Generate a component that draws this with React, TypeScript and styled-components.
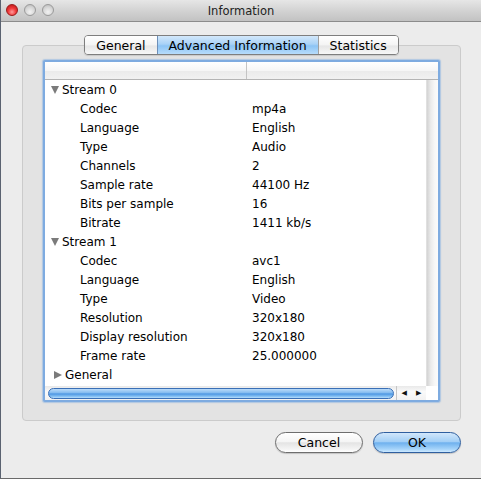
import * as React from 'react';
import styled, { createGlobalStyle } from 'styled-components';

const GlobalStyle = createGlobalStyle`
  html, body {
    margin: 0;
    padding: 0;
    background: #ececec;
  }
  body {
    font-family: "DejaVu Sans", "Liberation Sans", sans-serif;
    color: #000;
  }
`;

const Window = styled.div`
  width: 481px;
  height: 479px;
  box-sizing: border-box;
  display: flex;
  flex-direction: column;
  background: #ececec;
  border-left: 1px solid #5a6270;
  border-bottom: 1px solid #6a6a6a;
  overflow: hidden;
`;

const TitleBar = styled.div`
  position: relative;
  height: 22px;
  min-height: 22px;
  box-sizing: border-box;
  display: flex;
  align-items: center;
  justify-content: center;
  background-image: linear-gradient(180deg, #e6e6e6 0%, #d3d3d3 50%, #c2c2c2 100%);
  border-bottom: 1px solid #8c8c8c;
`;

const Lights = styled.div`
  position: absolute;
  left: 5px;
  top: 4px;
  display: flex;
  gap: 6px;
`;

const Light = styled.div<{ $red?: boolean }>`
  width: 12px;
  height: 12px;
  border-radius: 50%;
  box-sizing: border-box;
  border: 1px solid ${(p) => (p.$red ? '#9a1a1a' : '#9a9a9a')};
  background: ${(p) =>
    p.$red
      ? 'radial-gradient(circle at 50% 70%, #ff9b9b 0%, #f0393a 45%, #b51010 100%)'
      : 'radial-gradient(circle at 50% 70%, #f2f2f2 0%, #d6d6d6 55%, #b4b4b4 100%)'};
`;

const Title = styled.div`
  font-size: 11.5px;
  color: #222;
  margin-top: 1px;
`;

const Body = styled.div`
  flex: 1;
  display: flex;
  flex-direction: column;
  padding: 13px 20px 0 21px;
`;

const Tabs = styled.div`
  align-self: center;
  display: flex;
  margin-bottom: -10px;
  height: 20px;
  box-sizing: border-box;
  border: 1px solid #7e7e7e;
  border-radius: 4px;
  overflow: hidden;
  position: relative;
  z-index: 1;
  box-shadow: 0 1px 1px rgba(0, 0, 0, 0.12);
`;

const Tab = styled.div<{ $active?: boolean }>`
  display: flex;
  align-items: center;
  justify-content: center;
  padding: 0 11px;
  font-size: 12.5px;
  border-left: ${(p) => (p.$active ? '1px solid #6d8fb8' : '1px solid #a0a0a0')};
  background-image: ${(p) =>
    p.$active
      ? 'linear-gradient(180deg, #d3e8fb 0%, #a9d2f7 45%, #8cc4f5 55%, #b7dcfb 100%)'
      : 'linear-gradient(180deg, #ffffff 0%, #f4f4f4 50%, #e6e6e6 55%, #f7f7f7 100%)'};
  &:first-child {
    border-left: none;
  }
`;

const TabBox = styled.div`
  height: 376px;
  box-sizing: border-box;
  background: #e3e3e3;
  border: 1px solid #cbcbcb;
  border-radius: 4px;
  padding: 14px 20px 0 20px;
`;

const Ring = styled.div`
  height: 342px;
  box-sizing: border-box;
  border: 2px solid #7eabe0;
  border-radius: 2px;
  box-shadow: 0 0 1px 1px rgba(126, 171, 224, 0.5);
  background: #fff;
  display: grid;
  grid-template-rows: 18px 1fr 14px;
  overflow: hidden;
`;

const Header = styled.div`
  display: grid;
  grid-template-columns: 202px 1fr;
  box-sizing: border-box;
  border-bottom: 1px solid #b4b4b4;
  background-image: linear-gradient(180deg, #ffffff 0%, #f6f6f6 50%, #ebebeb 55%, #f1f1f1 100%);
`;

const HeaderCell = styled.div`
  border-right: 1px solid #c4c4c4;
`;

const Middle = styled.div`
  display: grid;
  grid-template-columns: 1fr 12px;
  min-height: 0;
`;

const Rows = styled.div`
  display: flex;
  flex-direction: column;
`;

const Row = styled.div`
  display: grid;
  grid-template-columns: 202px 1fr;
  height: 19px;
  align-items: center;
  font-size: 12px;
`;

const Label = styled.div<{ $child?: boolean }>`
  display: flex;
  align-items: center;
  padding-left: ${(p) => (p.$child ? '35px' : '6px')};
  white-space: nowrap;
`;

const Value = styled.div`
  padding-left: 5px;
  white-space: nowrap;
`;

const Disclosure = styled.span<{ $open?: boolean }>`
  display: inline-block;
  width: 0;
  height: 0;
  margin-right: 3px;
  ${(p) =>
    p.$open
      ? `border-left: 4.5px solid transparent;
         border-right: 4.5px solid transparent;
         border-top: 8px solid #7b7b7b;
         margin-left: 0;`
      : `border-top: 4.5px solid transparent;
         border-bottom: 4.5px solid transparent;
         border-left: 8px solid #7b7b7b;
         margin-left: 3px;
         margin-right: 3px;`}
`;

const VTrack = styled.div`
  background-image: linear-gradient(90deg, #d3d3d3 0%, #ebebeb 35%, #f7f7f7 70%, #fbfbfb 100%);
  border-left: 1px solid #e0e0e0;
`;

const HBar = styled.div`
  display: grid;
  grid-template-columns: 1fr 30px 12px;
  align-items: center;
  background-image: linear-gradient(180deg, #e9e9e9 0%, #fafafa 40%, #f2f2f2 100%);
`;

const HTrack = styled.div`
  height: 14px;
  display: flex;
  align-items: center;
  padding: 0 2px 0 3px;
`;

const Thumb = styled.div`
  height: 11px;
  flex: 1;
  border-radius: 6px;
  border: 1px solid #3a6fb6;
  box-sizing: border-box;
  background-image: linear-gradient(
    180deg,
    #bcdcf9 0%,
    #87bdf0 40%,
    #4e97e3 55%,
    #8bc4f5 85%,
    #b9defc 100%
  );
`;

const Arrows = styled.div`
  display: flex;
  align-items: center;
  justify-content: space-around;
  height: 14px;
  border-left: 1px solid #c6c6c6;
  font-size: 7px;
  color: #111;
`;

const Corner = styled.div`
  height: 14px;
  background: #fff;
`;

const Footer = styled.div`
  display: flex;
  justify-content: flex-end;
  gap: 10px;
  padding: 11px 0 0 0;
`;

const Button = styled.div<{ $primary?: boolean }>`
  width: 88px;
  height: 21px;
  box-sizing: border-box;
  border-radius: 11px;
  display: flex;
  align-items: center;
  justify-content: center;
  font-size: 12.5px;
  border: 1px solid ${(p) => (p.$primary ? '#2f5f9f' : '#6e6e6e')};
  box-shadow: 0 1px 1px rgba(0, 0, 0, 0.18);
  background-image: ${(p) =>
    p.$primary
      ? 'linear-gradient(180deg, #d2e7fb 0%, #a3cff6 45%, #6fb1ee 52%, #a6d4fa 85%, #cde9ff 100%)'
      : 'linear-gradient(180deg, #ffffff 0%, #f5f5f5 45%, #e4e4e4 52%, #f4f4f4 85%, #ffffff 100%)'};
`;

type Item = { label: string; value?: string; group?: boolean; open?: boolean };

const items: Item[] = [
  { label: 'Stream 0', group: true, open: true },
  { label: 'Codec', value: 'mp4a' },
  { label: 'Language', value: 'English' },
  { label: 'Type', value: 'Audio' },
  { label: 'Channels', value: '2' },
  { label: 'Sample rate', value: '44100 Hz' },
  { label: 'Bits per sample', value: '16' },
  { label: 'Bitrate', value: '1411 kb/s' },
  { label: 'Stream 1', group: true, open: true },
  { label: 'Codec', value: 'avc1' },
  { label: 'Language', value: 'English' },
  { label: 'Type', value: 'Video' },
  { label: 'Resolution', value: '320x180' },
  { label: 'Display resolution', value: '320x180' },
  { label: 'Frame rate', value: '25.000000' },
  { label: 'General', group: true, open: false },
];

export default function App() {
  return (
    <>
      <GlobalStyle />
      <Window>
        <TitleBar>
          <Lights>
            <Light $red />
            <Light />
            <Light />
          </Lights>
          <Title>Information</Title>
        </TitleBar>
        <Body>
          <Tabs>
            <Tab>General</Tab>
            <Tab $active>Advanced Information</Tab>
            <Tab>Statistics</Tab>
          </Tabs>
          <TabBox>
            <Ring>
              <Header>
                <HeaderCell />
                <div />
              </Header>
              <Middle>
                <Rows>
                  {items.map((it, i) => (
                    <Row key={i}>
                      <Label $child={!it.group}>
                        {it.group && <Disclosure $open={it.open} />}
                        {it.label}
                      </Label>
                      <Value>{it.value}</Value>
                    </Row>
                  ))}
                </Rows>
                <VTrack />
              </Middle>
              <HBar>
                <HTrack>
                  <Thumb />
                </HTrack>
                <Arrows>
                  <span>◀</span>
                  <span>▶</span>
                </Arrows>
                <Corner />
              </HBar>
            </Ring>
          </TabBox>
          <Footer>
            <Button>Cancel</Button>
            <Button $primary>OK</Button>
          </Footer>
        </Body>
      </Window>
    </>
  );
}
